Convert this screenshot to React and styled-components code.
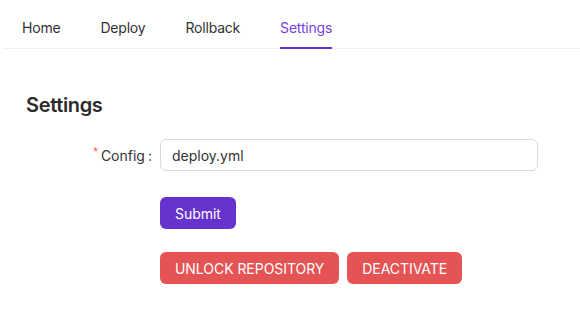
import styled, { createGlobalStyle } from "styled-components";
import { useState } from "react";

const GlobalStyle = createGlobalStyle`
  body {
    margin: 0;
    background: #ffffff;
    font-family: Inter, "Noto Sans", "Liberation Sans", sans-serif;
    color: #333333;
  }
`;

const tabs = ["Home", "Deploy", "Rollback", "Settings"];

export default function App() {
  const [active, setActive] = useState("Settings");
  const [config, setConfig] = useState("deploy.yml");

  return (
    <StyledPage>
      <GlobalStyle />
      <StyledNav>
        {tabs.map((tab) => (
          <StyledTab
            key={tab}
            $active={tab === active}
            onClick={() => setActive(tab)}
          >
            {tab}
          </StyledTab>
        ))}
      </StyledNav>
      <StyledContent>
        <StyledTitle>Settings</StyledTitle>
        <StyledRow $gap={26}>
          <StyledLabel>
            <StyledRequired>*</StyledRequired>
            Config
            <StyledColon>:</StyledColon>
          </StyledLabel>
          <StyledInput
            value={config}
            onChange={(e) => setConfig(e.target.value)}
          />
        </StyledRow>
        <StyledRow $gap={23}>
          <span />
          <div>
            <StyledButton $color="#6633cc">Submit</StyledButton>
          </div>
        </StyledRow>
        <StyledRow $gap={0}>
          <span />
          <StyledActions>
            <StyledButton $color="#e45455" $upper>
              Unlock Repository
            </StyledButton>
            <StyledButton $color="#e45455" $upper>
              Deactivate
            </StyledButton>
          </StyledActions>
        </StyledRow>
      </StyledContent>
    </StyledPage>
  );
}

const StyledPage = styled.div`
  padding-left: 2px;
`;

const StyledNav = styled.nav`
  display: flex;
  height: 48px;
  border-bottom: 1px solid #efefef;
`;

const StyledTab = styled.div`
  display: flex;
  align-items: center;
  box-sizing: border-box;
  height: 49px;
  margin-bottom: -1px;
  padding: 5px 20px 0;
  font-size: 14px;
  letter-spacing: -0.2px;
  cursor: pointer;
  color: ${(p) => (p.$active ? "#7443e0" : "#333333")};
  position: relative;

  &::after {
    content: "";
    position: absolute;
    left: 20px;
    right: 20px;
    bottom: 0;
    height: 2px;
    background: ${(p) => (p.$active ? "#6633cc" : "transparent")};
  }
`;

const StyledContent = styled.div`
  padding: 0 24px;
`;

const StyledTitle = styled.h2`
  margin: 42px 0 20px;
  font-size: 20px;
  line-height: 28px;
  font-weight: 600;
  letter-spacing: -0.35px;
  color: #2b2b2b;
`;

const StyledRow = styled.div`
  display: grid;
  grid-template-columns: 134px 378px;
  align-items: center;
  margin-bottom: ${(p) => p.$gap}px;
`;

const StyledLabel = styled.label`
  display: flex;
  align-items: center;
  justify-content: flex-end;
  height: 32px;
  font-size: 14px;
  color: #333333;
`;

const StyledRequired = styled.span`
  color: #ff4d4f;
  font-family: "Liberation Sans", sans-serif;
  font-size: 12px;
  margin-right: 3px;
  position: relative;
  top: -3px;
`;

const StyledColon = styled.span`
  margin: 0 8px 0 3px;
`;

const StyledInput = styled.input`
  box-sizing: border-box;
  width: 100%;
  height: 32px;
  padding: 0 11px;
  border: 1px solid #d9d9d9;
  border-radius: 6px;
  font-family: inherit;
  font-size: 14px;
  color: #333333;
  outline: none;
`;

const StyledActions = styled.div`
  display: flex;
  gap: 8px;
`;

const StyledButton = styled.button`
  height: 32px;
  padding: 0 15px;
  border: none;
  border-radius: 6px;
  background: ${(p) => p.$color};
  color: #ffffff;
  font-family: inherit;
  font-size: 14px;
  letter-spacing: -0.05px;
  text-transform: ${(p) => (p.$upper ? "uppercase" : "none")};
  cursor: pointer;
`;
